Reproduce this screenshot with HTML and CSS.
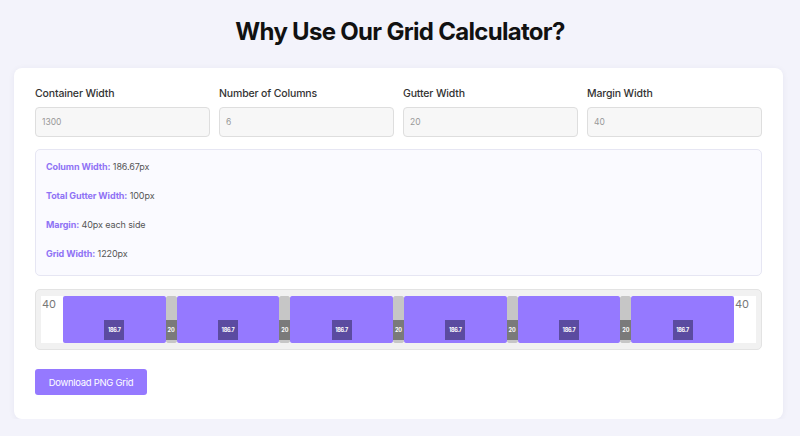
FILE: index.html
```html
<!DOCTYPE html>
<html lang="en">
<head>
<meta charset="utf-8">
<title>Grid Calculator</title>
<link rel="stylesheet" href="styles.css">
</head>
<body>
<h1 class="title">Why Use Our Grid Calculator?</h1>
<section class="card">
  <div class="fields">
    <label class="field"><span class="field-label">Container Width</span><input class="field-input" value="1300"></label>
    <label class="field"><span class="field-label">Number of Columns</span><input class="field-input" value="6"></label>
    <label class="field"><span class="field-label">Gutter Width</span><input class="field-input" value="20"></label>
    <label class="field"><span class="field-label">Margin Width</span><input class="field-input" value="40"></label>
  </div>
  <div class="info">
    <p class="info-line"><strong>Column Width:</strong> 186.67px</p>
    <p class="info-line"><strong>Total Gutter Width:</strong> 100px</p>
    <p class="info-line"><strong>Margin:</strong> 40px each side</p>
    <p class="info-line"><strong>Grid Width:</strong> 1220px</p>
  </div>
  <div class="preview">
    <div class="preview-inner">
      <div class="margin">40</div>
      <div class="col"><span class="col-tag">186.7</span></div>
      <div class="gutter"><span class="gutter-tag">20</span></div>
      <div class="col"><span class="col-tag">186.7</span></div>
      <div class="gutter"><span class="gutter-tag">20</span></div>
      <div class="col"><span class="col-tag">186.7</span></div>
      <div class="gutter"><span class="gutter-tag">20</span></div>
      <div class="col"><span class="col-tag">186.7</span></div>
      <div class="gutter"><span class="gutter-tag">20</span></div>
      <div class="col"><span class="col-tag">186.7</span></div>
      <div class="gutter"><span class="gutter-tag">20</span></div>
      <div class="col"><span class="col-tag">186.7</span></div>
      <div class="margin">40</div>
    </div>
  </div>
  <button class="btn">Download PNG Grid</button>
</section>
</body>
</html>
```
FILE: styles.css
```css
* { box-sizing: border-box; }
body {
  margin: 0;
  background: #f3f3fb;
  font-family: Inter, "Noto Sans", sans-serif;
  color: #222;
}
.title {
  margin: 0;
  padding-top: 17px;
  height: 68px;
  text-align: center;
  font-size: 24px;
  line-height: 30px;
  font-weight: 700;
  letter-spacing: -0.7px;
  color: #111;
}
.card {
  margin: 0 17px 0 14px;
  background: #fff;
  border-radius: 8px;
  padding: 19px 21px 24px 21px;
  box-shadow: 0 1px 6px rgba(40, 40, 90, 0.06);
}
.fields {
  display: grid;
  grid-template-columns: repeat(4, 1fr);
  gap: 9px;
}
.field {
  display: flex;
  flex-direction: column;
  gap: 6px;
}
.field-label {
  font-size: 10.5px;
  line-height: 14px;
  font-weight: 500;
  color: #333;
  letter-spacing: -0.15px;
}
.field-input {
  height: 30px;
  border: 1px solid #dedede;
  border-radius: 4px;
  background: #f7f7f7;
  padding: 0 6px;
  font-family: inherit;
  font-size: 8.5px;
  color: #999;
  width: 100%;
}
.info {
  margin-top: 12px;
  border: 1px solid #e6e6f3;
  border-radius: 5px;
  background: #fafaff;
  padding: 10px 10px 14px;
  display: flex;
  flex-direction: column;
  gap: 15px;
}
.info-line {
  margin: 0;
  font-size: 9px;
  line-height: 14px;
  color: #555;
  letter-spacing: -0.1px;
}
.info-line strong {
  color: #8f73f5;
  font-weight: 700;
}
.preview {
  margin-top: 13px;
  border: 1px solid #e3e3e3;
  border-radius: 5px;
  background: #f1f1f1;
  padding: 6px 5px;
}
.preview-inner {
  display: flex;
  height: 47px;
  background: #fff;
}
.margin {
  width: 22px;
  flex: none;
  font-size: 11px;
  line-height: 14px;
  color: #777;
  padding-left: 1px;
  padding-top: 1px;
}
.col {
  width: 102.67px;
  flex: none;
  background: #9579ff;
  border-radius: 2px;
  display: flex;
  align-items: flex-end;
  justify-content: center;
  padding-bottom: 3px;
}
.col-tag {
  width: 20px;
  height: 20px;
  background: #5b4ba0;
  color: #fff;
  font-size: 5.5px;
  font-weight: 700;
  letter-spacing: -0.3px;
  display: flex;
  align-items: center;
  justify-content: center;
}
.gutter {
  width: 11px;
  flex: none;
  background: #c6c6c6;
  border-radius: 2px;
  display: flex;
  align-items: flex-end;
  padding-bottom: 3px;
}
.gutter-tag {
  width: 100%;
  height: 20px;
  background: #7a7a7a;
  color: #fff;
  font-size: 5.5px;
  font-weight: 700;
  display: flex;
  align-items: center;
  justify-content: center;
}
.btn {
  margin-top: 19px;
  width: 112px;
  height: 26px;
  border: none;
  border-radius: 3px;
  background: #9579ff;
  color: #fff;
  font-family: inherit;
  font-size: 9.5px;
  letter-spacing: -0.3px;
  display: block;
}
```
